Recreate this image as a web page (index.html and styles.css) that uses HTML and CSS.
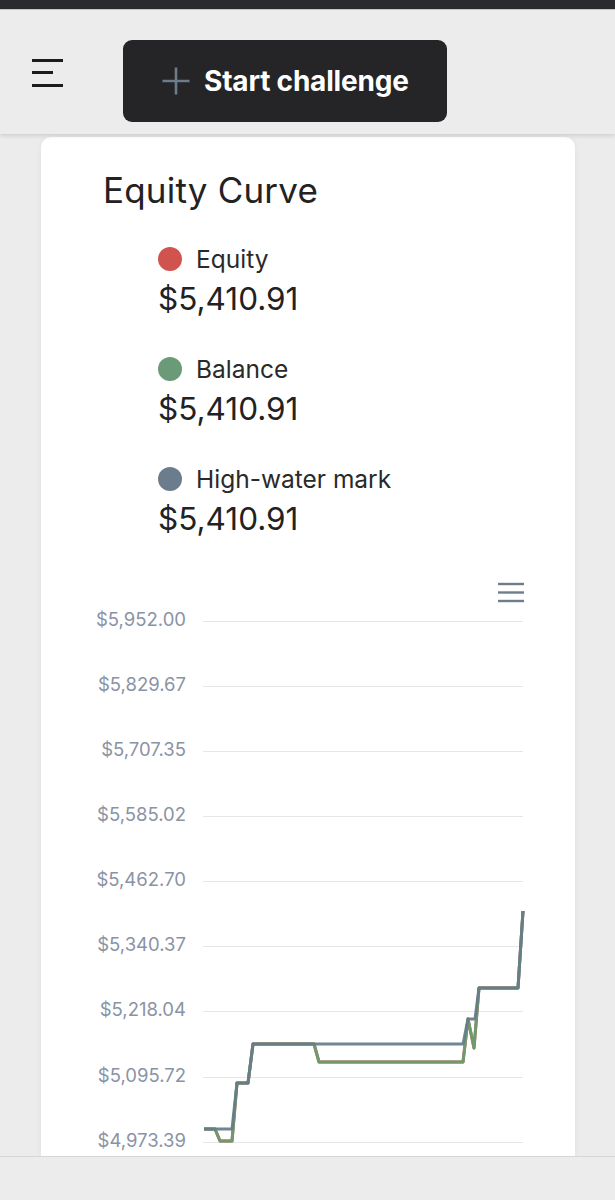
FILE: index.html
```html
<!DOCTYPE html>
<html lang="en">
<head>
    <meta charset="UTF-8">
    <meta name="viewport" content="width=device-width, initial-scale=1.0">
    <title>Equity Curve</title>
    <link rel="stylesheet" href="styles.css">
</head>
<body>
    <div class="status-bar"></div>

    <header class="topbar">
        <button class="menu-btn" aria-label="Menu">
            <span class="bar"></span>
            <span class="bar short"></span>
            <span class="bar"></span>
        </button>
        <button class="start-btn">
            <svg class="plus" viewBox="0 0 28 28" width="28" height="28">
                <path d="M14 0.5v27M0.5 14h27" stroke="#6c7c89" stroke-width="2.6" fill="none"/>
            </svg>
            <span>Start challenge</span>
        </button>
    </header>

    <main class="content">
        <section class="card">
            <h1 class="card-title">Equity Curve</h1>

            <ul class="legend">
                <li class="legend-item">
                    <div class="legend-label"><span class="dot equity"></span>Equity</div>
                    <div class="legend-value">$5,410.91</div>
                </li>
                <li class="legend-item">
                    <div class="legend-label"><span class="dot balance"></span>Balance</div>
                    <div class="legend-value">$5,410.91</div>
                </li>
                <li class="legend-item">
                    <div class="legend-label"><span class="dot hwm"></span>High-water mark</div>
                    <div class="legend-value">$5,410.91</div>
                </li>
            </ul>

            <div class="chart">
                <svg class="chart-svg" viewBox="41 570 534 586" width="534" height="586">
                    <g class="chart-menu" stroke="#6e7d8e" stroke-width="2.4">
                        <line x1="498" y1="584" x2="524" y2="584"/>
                        <line x1="498" y1="592.5" x2="524" y2="592.5"/>
                        <line x1="498" y1="601" x2="524" y2="601"/>
                    </g>

                    <g class="grid" stroke="#e6e6e6" stroke-width="1">
                        <line x1="203" y1="621.5" x2="523" y2="621.5"/>
                        <line x1="203" y1="686.5" x2="523" y2="686.5"/>
                        <line x1="203" y1="751.5" x2="523" y2="751.5"/>
                        <line x1="203" y1="816.5" x2="523" y2="816.5"/>
                        <line x1="203" y1="881.5" x2="523" y2="881.5"/>
                        <line x1="203" y1="946.5" x2="523" y2="946.5"/>
                        <line x1="203" y1="1011.5" x2="523" y2="1011.5"/>
                        <line x1="203" y1="1077.5" x2="523" y2="1077.5"/>
                        <line x1="203" y1="1142.5" x2="523" y2="1142.5"/>
                    </g>

                    <g class="y-labels">
                        <text x="186" y="626">$5,952.00</text>
                        <text x="186" y="691">$5,829.67</text>
                        <text x="186" y="756">$5,707.35</text>
                        <text x="186" y="821">$5,585.02</text>
                        <text x="186" y="886">$5,462.70</text>
                        <text x="186" y="951">$5,340.37</text>
                        <text x="186" y="1016">$5,218.04</text>
                        <text x="186" y="1082">$5,095.72</text>
                        <text x="186" y="1147">$4,973.39</text>
                    </g>

                    <g class="series" fill="none" stroke-width="3" stroke-linejoin="round">
                        <polyline stroke="#d0534d" points="204,1129 215,1129 220,1141 232,1141 237,1083 248,1083 253,1044 314,1044 319,1062 463,1062 468,1019 474,1048 479,988 518,988 523,911"/>
                        <polyline stroke="#6f9a6e" points="204,1129 215,1129 220,1141 232,1141 237,1083 248,1083 253,1044 314,1044 319,1062 463,1062 468,1019 474,1048 479,988 518,988 523,911"/>
                        <polyline stroke="#637d88" stroke-opacity="0.92" points="204,1129 232,1129 237,1083 248,1083 253,1044 463,1044 468,1019 475,1019 479,988 518,988 523,911"/>
                    </g>
                </svg>
            </div>
        </section>
    </main>

    <footer class="bottom-bar"></footer>
</body>
</html>
```

FILE: styles.css
```css
* {
    margin: 0;
    padding: 0;
    box-sizing: border-box;
    font-family: Inter, "Noto Sans", Arial, sans-serif;
}

body {
    background: #ececec;
    color: #222;
    overflow: hidden;
    height: 1200px;
}

.status-bar {
    height: 10px;
    background: #2b2b2f;
    border-bottom: 1px solid #c9c9cc;
}

.topbar {
    height: 124px;
    display: flex;
    align-items: center;
    gap: 59px;
    padding: 0 0 0 32px;
    background: #ececec;
    box-shadow: 0 2px 4px rgba(0, 0, 0, 0.12);
    position: relative;
    z-index: 2;
}

.menu-btn {
    display: flex;
    flex-direction: column;
    gap: 9.5px;
    width: 32px;
    background: none;
    border: none;
    margin-top: 1px;
}

.menu-btn .bar {
    display: block;
    height: 3px;
    width: 31px;
    background: #1c1c1c;
}

.menu-btn .bar.short {
    width: 21px;
}

.start-btn {
    display: flex;
    align-items: center;
    gap: 14px;
    width: 324px;
    height: 82px;
    padding-left: 39px;
    background: #252528;
    color: #fff;
    border: none;
    border-radius: 9px;
    font-size: 28px;
    font-weight: 700;
    letter-spacing: -0.2px;
    margin-top: 17px;
}

.start-btn .plus {
    flex-shrink: 0;
}

.content {
    padding: 3px 40px 0 41px;
}

.card {
    background: #fff;
    border-radius: 10px;
    box-shadow: 0 1px 6px rgba(0, 0, 0, 0.06);
    width: 534px;
    height: 1100px;
    padding-top: 33px;
}

.card-title {
    font-size: 35px;
    font-weight: 400;
    line-height: 40px;
    color: #222;
    margin-left: 62px;
    letter-spacing: 0.2px;
}

.legend {
    list-style: none;
    margin: 34px 0 0 117px;
    display: flex;
    flex-direction: column;
    gap: 30px;
}

.legend-label {
    display: flex;
    align-items: center;
    gap: 14px;
    font-size: 24.5px;
    line-height: 30px;
    color: #2a2a2a;
}

.dot {
    width: 24px;
    height: 24px;
    border-radius: 50%;
    display: inline-block;
}

.dot.equity { background: #d0534d; }
.dot.balance { background: #6a9a78; }
.dot.hwm { background: #6b7d8c; }

.legend-value {
    font-size: 31.5px;
    line-height: 50px;
    color: #222;
}

.chart {
    position: absolute;
    top: 570px;
    left: 41px;
}

.chart-svg {
    display: block;
}

.y-labels text {
    font-family: Inter, "Noto Sans", Arial, sans-serif;
    font-size: 18.5px;
    fill: #8a93a5;
    text-anchor: end;
}

.bottom-bar {
    position: fixed;
    left: 0;
    right: 0;
    bottom: 0;
    height: 44px;
    background: #ececec;
    border-top: 1px solid #d6d6d6;
    z-index: 3;
}
```
